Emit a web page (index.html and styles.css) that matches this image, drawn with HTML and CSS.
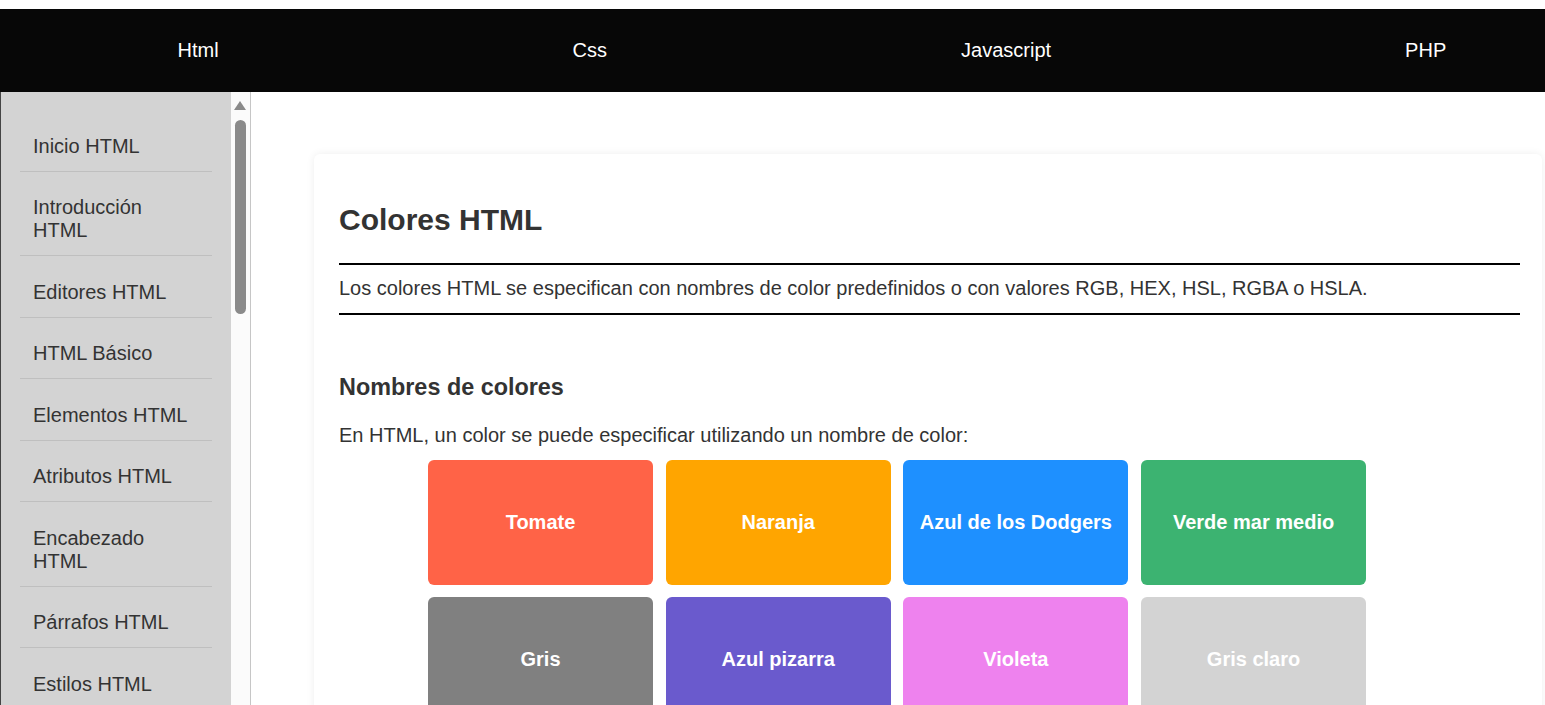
FILE: index.html
```html
<!DOCTYPE html>
<html lang="es">
<head>
<meta charset="utf-8">
<title>Colores HTML</title>
<link rel="stylesheet" href="styles.css">
</head>
<body>
<header class="topbar">
  <a class="topbar__link" href="#">Html</a>
  <a class="topbar__link" href="#">Css</a>
  <a class="topbar__link" href="#">Javascript</a>
  <a class="topbar__link" href="#">PHP</a>
</header>
<div class="layout">
  <aside class="sidebar">
    <ul class="sidebar__list">
      <li class="sidebar__item">Inicio HTML</li>
      <li class="sidebar__item">Introducción HTML</li>
      <li class="sidebar__item">Editores HTML</li>
      <li class="sidebar__item">HTML Básico</li>
      <li class="sidebar__item">Elementos HTML</li>
      <li class="sidebar__item">Atributos HTML</li>
      <li class="sidebar__item">Encabezado HTML</li>
      <li class="sidebar__item">Párrafos HTML</li>
      <li class="sidebar__item">Estilos HTML</li>
    </ul>
    <div class="scrollbar">
      <span class="scrollbar__arrow"></span>
      <span class="scrollbar__thumb"></span>
    </div>
  </aside>
  <main class="main">
    <article class="card">
      <h1 class="card__title">Colores HTML</h1>
      <p class="card__lead">Los colores HTML se especifican con nombres de color predefinidos o con valores RGB, HEX, HSL, RGBA o HSLA.</p>
      <h3 class="card__subtitle">Nombres de colores</h3>
      <p class="card__text">En HTML, un color se puede especificar utilizando un nombre de color:</p>
      <div class="swatches">
        <div class="swatch swatch--tomato">Tomate</div>
        <div class="swatch swatch--orange">Naranja</div>
        <div class="swatch swatch--dodger">Azul de los Dodgers</div>
        <div class="swatch swatch--sea">Verde mar medio</div>
        <div class="swatch swatch--gray">Gris</div>
        <div class="swatch swatch--slate">Azul pizarra</div>
        <div class="swatch swatch--violet">Violeta</div>
        <div class="swatch swatch--light">Gris claro</div>
      </div>
    </article>
  </main>
</div>
</body>
</html>
```

FILE: styles.css
```css
html, body {
  height: 100%;
}

body {
  margin: 0;
  padding-top: 9px;
  box-sizing: border-box;
  font-family: "Liberation Sans", Arial, sans-serif;
  font-size: 20px;
  color: #333;
  background: #fff;
  overflow: hidden;
  display: flex;
  flex-direction: column;
}

.topbar {
  flex: 0 0 83px;
  background: #070707;
  display: flex;
  align-items: center;
  gap: 354px;
  padding-left: 177.5px;
  white-space: nowrap;
}

.topbar__link {
  color: #fff;
  text-decoration: none;
  font-size: 20px;
}

.layout {
  flex: 1;
  display: flex;
  min-height: 0;
}

.sidebar {
  flex: 0 0 auto;
  display: flex;
  border-left: 1px solid #444;
  border-right: 1px solid #c6c6c6;
}

.sidebar__list {
  width: 230px;
  margin: 0;
  padding: 18px 0 0;
  list-style: none;
  background: #d3d3d3;
  overflow: hidden;
  box-sizing: border-box;
}

.sidebar__item {
  margin: 0 19px;
  padding: 24.5px 13px 13px;
  border-bottom: 1px solid #bfbfbf;
  line-height: 23px;
}

.scrollbar {
  width: 19px;
  background: #fbfbfb;
  display: flex;
  flex-direction: column;
  align-items: flex-start;
  padding-left: 3px;
  box-sizing: border-box;
}

.scrollbar__arrow {
  width: 0;
  height: 0;
  margin-top: 9px;
  border-left: 6.5px solid transparent;
  border-right: 6.5px solid transparent;
  border-bottom: 9px solid #8a8a8a;
}

.scrollbar__thumb {
  width: 11px;
  height: 194px;
  margin-top: 10px;
  margin-left: 1px;
  border-radius: 6px;
  background: #8a8a8a;
}

.main {
  flex: 1;
  min-width: 0;
  padding: 62px 3px 0 63px;
  overflow: hidden;
}

.card {
  background: #fff;
  border-radius: 6px;
  box-shadow: 0 0 9px rgba(0, 0, 0, 0.07);
  padding: 25px 22px 25px 25px;
}

.card__title {
  font-size: 30px;
  font-weight: bold;
  margin: 23.5px 0 26px;
}

.card__lead {
  margin: 0;
  padding: 12px 0 13px;
  border-top: 2px solid #000;
  border-bottom: 2px solid #000;
  line-height: 23px;
}

.card__subtitle {
  font-size: 23.4px;
  font-weight: bold;
  margin: 59px 0 23px;
}

.card__text {
  margin: 0 0 13.1px;
  line-height: 23px;
}

.swatches {
  display: grid;
  grid-template-columns: repeat(4, 225px);
  column-gap: 12.7px;
  row-gap: 12px;
  margin-left: 89px;
}

.swatch {
  height: 125px;
  border-radius: 6px;
  display: flex;
  align-items: center;
  justify-content: center;
  color: #fff;
  font-weight: bold;
  font-size: 20px;
}

.swatch--tomato { background: #ff6347; }
.swatch--orange { background: #ffa500; }
.swatch--dodger { background: #1e90ff; }
.swatch--sea { background: #3cb371; }
.swatch--gray { background: #808080; }
.swatch--slate { background: #6a5acd; }
.swatch--violet { background: #ee82ee; }
.swatch--light { background: #d3d3d3; }
```
